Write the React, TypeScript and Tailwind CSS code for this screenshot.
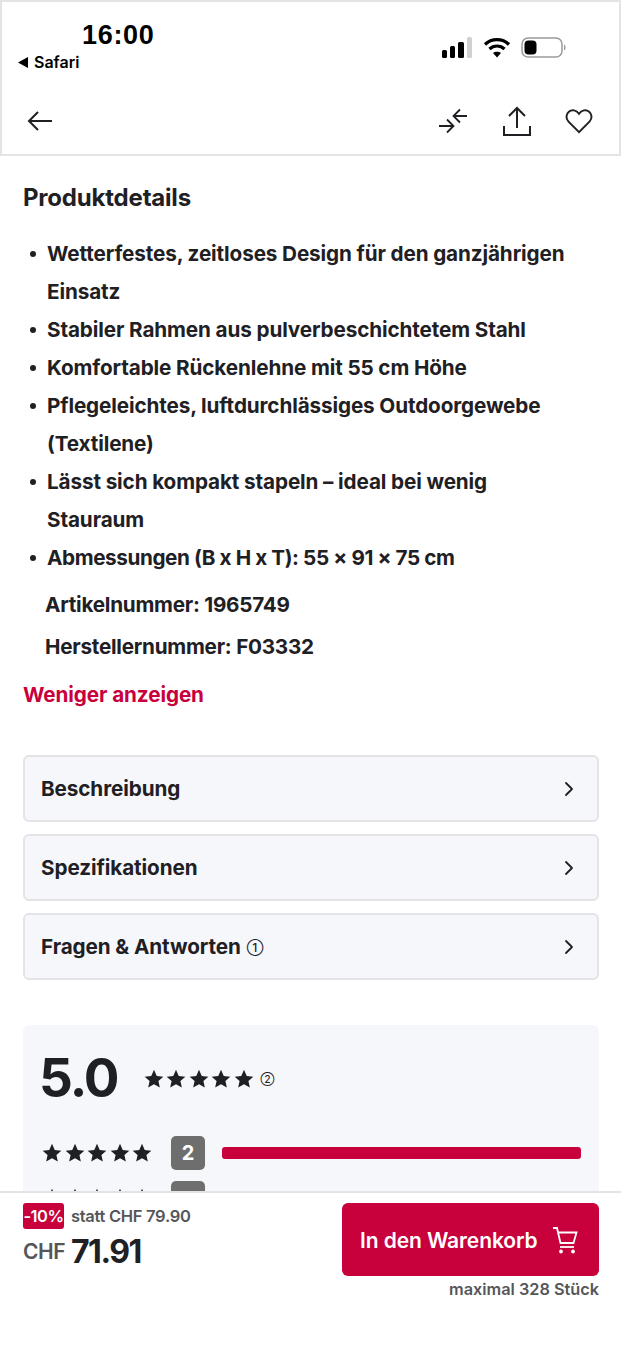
import { ChevronRight } from 'lucide-react';

const bullets = [
  'Wetterfestes, zeitloses Design für den ganzjährigen Einsatz',
  'Stabiler Rahmen aus pulverbeschichtetem Stahl',
  'Komfortable Rückenlehne mit 55 cm Höhe',
  'Pflegeleichtes, luftdurchlässiges Outdoorgewebe (Textilene)',
  'Lässt sich kompakt stapeln – ideal bei wenig Stauraum',
];

const sections = ['Beschreibung', 'Spezifikationen', 'Fragen & Antworten'];

function Star({ size }: { size: number }) {
  return (
    <svg width={size} height={size} viewBox="0 0 24 24" fill="#1f2024">
      <path d="M12 1l3.300 7.300 7.900.9-5.900 5.300 1.700 7.800L12 18.300l-7 4 1.700-7.800L.8 9.200l7.900-.9z" />
    </svg>
  );
}

function Stars() {
  return (
    <div className="flex gap-[2.500px]">
      {[0, 1, 2, 3, 4].map((i) => (
        <Star key={i} size={20} />
      ))}
    </div>
  );
}

function Dot() {
  return <span className="w-[6px] h-[6px] mt-[16px] mr-[11px] rounded-full bg-[#1f2024] shrink-0" />;
}

export default function App() {
  return (
    <div className="w-[621px] h-[1350px] flex flex-col bg-white overflow-hidden text-[#1f2024] font-['Inter',sans-serif]">
      {/* Status bar + nav */}
      <header className="h-[156px] shrink-0 border-2 border-[#e4e4e4] relative">
        <div className="flex justify-between">
          <div className="pl-[16px] pt-[17px]">
            <div className="pl-[64px] text-[27px] leading-[32px] font-bold text-black font-['Liberation_Sans',sans-serif] tracking-[0.7px]">16:00</div>
            <div className="flex items-center gap-[6px] text-[16px] leading-[22px] font-semibold text-black">
              <svg width="10" height="11" viewBox="0 0 10 11" fill="black"><path d="M0 5.500L10 0v11z" /></svg>
              Safari
            </div>
          </div>
          <div className="flex items-center gap-[10px] pr-[52px] pt-[30px] h-[60px]">
            <svg width="31" height="21" viewBox="0 0 31 21">
              <rect x="0" y="13" width="5" height="8" rx="1.500" fill="black" />
              <rect x="8" y="9" width="5" height="12" rx="1.500" fill="black" />
              <rect x="16" y="5" width="6" height="16" rx="1.500" fill="black" />
              <rect x="25" y="0" width="5" height="21" rx="1.500" fill="#d0d0d0" />
            </svg>
            <svg width="28" height="21" viewBox="0 0 27 21" fill="none" stroke="black" strokeWidth="3.200">
              <path d="M1.500 7.500c6.500-6.500 17.500-6.500 24 0" />
              <path d="M6 12c4-4 11-4 15 0" />
              <path d="M13.500 20.500l-4-4.500c2-1.800 6-1.800 8 0z" fill="black" stroke="none" />
            </svg>
            <svg width="46" height="21" viewBox="0 0 46 21" fill="none">
              <rect x="1" y="1" width="40" height="19" rx="6" stroke="#9a9a9a" strokeWidth="1.500" />
              <rect x="3.500" y="3.500" width="12" height="14" rx="4" fill="black" />
              <path d="M43 7.500c2 .5 2 5.500 0 6z" fill="#9a9a9a" />
            </svg>
          </div>
        </div>
        <div className="flex items-center justify-between pl-[24px] pr-[26px] mt-[32px] text-[#1f2024]">
          <svg width="28" height="24" viewBox="0 0 28 24" fill="none" stroke="currentColor" strokeWidth="2">
            <path d="M26 12H3M12 3l-9 9 9 9" />
          </svg>
          <div className="flex items-center gap-[33px]">
            <svg width="32" height="28" viewBox="0 0 32 28" fill="none" stroke="currentColor" strokeWidth="1.800">
              <path d="M2 19h14M10 12.500l6.500 6.500-6.500 6.500" />
              <path d="M30 9H17M23 2.500L16.500 9l6.500 6.500" />
            </svg>
            <svg width="30" height="32" viewBox="0 0 30 32" fill="none" stroke="currentColor" strokeWidth="2">
              <path d="M15 23V3M7 11l8-8 8 8" />
              <path d="M2 21v9h26v-9" />
            </svg>
            <svg width="28" height="26" viewBox="0 0 24 22" fill="none" stroke="currentColor" strokeWidth="1.700">
              <path d="M12 20.500L3 11.500C.5 9 .8 5 3.300 3c2.600-2 6.400-1.500 8.700 1.800C14.300 1.500 18.100 1 20.700 3c2.500 2 2.800 6 .3 8.500z" />
            </svg>
          </div>
        </div>
      </header>

      {/* Scrollable content, cut off by the buy bar */}
      <main className="flex-1 min-h-0 overflow-hidden pl-[23px] pr-[22px]">
        <h2 className="text-[24px] leading-[32px] font-bold tracking-[-0.2px] mt-[26px]">Produktdetails</h2>
        <ul className="mt-[21px] pl-[7px] pr-[28px] text-[20.700px] leading-[38px] font-bold tracking-[-0.12px]">
          {bullets.map((b) => (
            <li key={b} className="flex">
              <Dot />
              <span>{b}</span>
            </li>
          ))}
          <li className="flex tracking-[-0.4px]">
            <Dot />
            <span>Abmessungen (B x H x T): 55 × 91 × 75 cm</span>
          </li>
        </ul>
        <div className="mt-[7px] pl-[22px] text-[20.700px] font-bold tracking-[-0.25px] leading-[42px]">
          <p>Artikelnummer: 1965749</p>
          <p>Herstellernummer: F03332</p>
        </div>
        <button className="block mt-[13px] text-[20.700px] leading-[28px] font-bold tracking-[-0.1px] text-[#c8003c]">Weniger anzeigen</button>

        <div className="mt-[46px] flex flex-col gap-[12px]">
          {sections.map((s, i) => (
            <div key={s} className="h-[67px] flex items-center justify-between pl-[16px] pr-[16px] bg-[#f6f7fb] border-2 border-[#e4e4e8] rounded-[6px]">
              <span className="text-[20.700px] font-bold tracking-[-0.1px]">
                {s}
                {i === 2 && <span className="ml-[6px] font-medium text-[12px] align-[2px]">①</span>}
              </span>
              <ChevronRight size={24} strokeWidth={1.800} />
            </div>
          ))}
        </div>

        <section className="mt-[45px] bg-[#f6f7fb] rounded-[6px] pl-[18px] pr-[18px] pt-[20px] h-[300px]">
          <div className="flex items-center gap-[26px]">
            <span className="-ml-[2px] text-[53px] leading-[66px] font-bold tracking-[-2px]">5.0</span>
            <div className="flex items-center gap-[7px] mt-[1px]">
              <Stars />
              <span className="text-[10px] leading-none font-medium">②</span>
            </div>
          </div>
          <div className="mt-[25px] flex items-center">
            <div className="w-[129px] ml-[1px]"><Stars /></div>
            <span className="w-[34px] h-[34px] rounded-[5px] bg-[#6e6e6e] text-white font-bold text-[20px] flex items-center justify-center">2</span>
            <div className="ml-[17px] w-[359px] h-[12px] rounded-[3px] bg-[#c8003c]" />
          </div>
          <div className="mt-[11px] flex items-center">
            <div className="w-[129px] ml-[1px]"><Stars /></div>
            <span className="w-[34px] h-[34px] rounded-[5px] bg-[#6e6e6e]" />
          </div>
        </section>
      </main>

      {/* Buy bar */}
      <footer className="h-[159px] shrink-0 border-t-2 border-[#e4e4e4] bg-white pl-[23px] pr-[22px] pt-[10px] flex justify-between">
        <div>
          <div className="flex items-center gap-[7px]">
            <span className="h-[26px] w-[41px] rounded-[3px] bg-[#c8003c] text-white text-[16.500px] font-semibold flex items-center justify-center tracking-[-0.5px]">-10%</span>
            <span className="text-[16.500px] font-semibold text-[#55565a] tracking-[-0.3px]">statt CHF 79.90</span>
          </div>
          <div className="flex items-center gap-[6px] mt-[2px]">
            <span className="text-[21px] leading-[42px] font-semibold text-[#55565a] tracking-[-0.5px]">CHF</span>
            <span className="text-[32px] leading-[42px] font-bold tracking-[-1.500px]">71.91</span>
          </div>
        </div>
        <div className="flex flex-col items-end">
          <button className="w-[257px] h-[73px] rounded-[6px] bg-[#c8003c] text-white flex items-center pl-[18px] gap-[15px] text-[21px] font-semibold tracking-[-0.1px]">
            <span className="mt-[3px]">In den Warenkorb</span>
            <svg className="-ml-[1px]" width="26" height="28" viewBox="0 0 26 28" fill="none" stroke="currentColor" strokeWidth="1.800">
              <path d="M1 2h4l3.500 15h13l3-10.500H6" />
              <path d="M8 21h14" />
              <circle cx="9" cy="25.500" r="1" fill="currentColor" />
              <circle cx="21" cy="25.500" r="1" fill="currentColor" />
            </svg>
          </button>
          <span className="mt-[2px] text-[16.300px] leading-[22px] font-semibold text-[#55565a]">maximal 328 Stück</span>
        </div>
      </footer>
    </div>
  );
}
